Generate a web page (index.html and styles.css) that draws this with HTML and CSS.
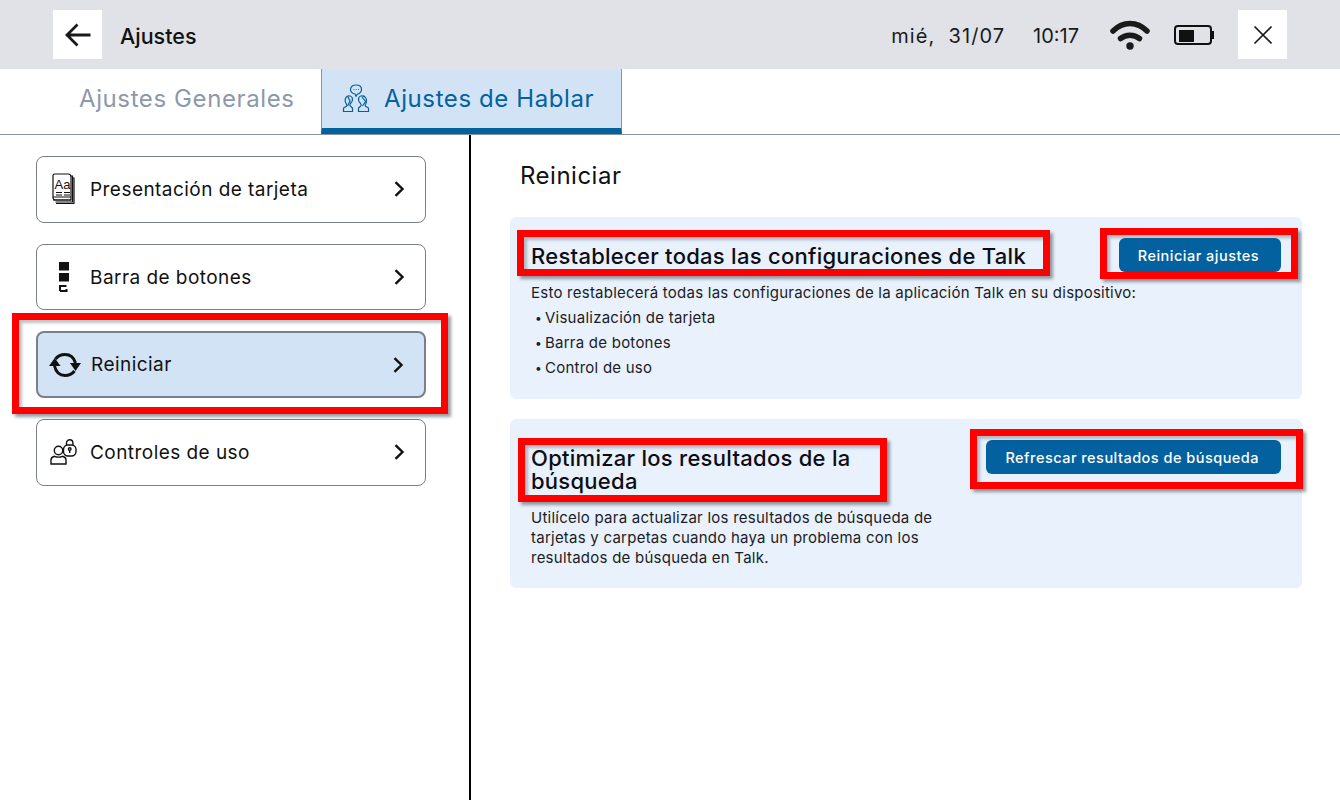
FILE: index.html
```html
<!DOCTYPE html>
<html lang="es">
<head>
<meta charset="utf-8">
<title>Ajustes</title>
<link rel="stylesheet" href="styles.css">
</head>
<body>
<div class="app">
  <header class="topbar">
    <button class="square back" aria-label="Atrás">
      <svg width="30" height="30" viewBox="0 0 30 30"><path d="M27.500 15H4M14.500 4.500 4 15l10.500 10.500" fill="none" stroke="#1a1a1a" stroke-width="2.800"/></svg>
    </button>
    <div class="app-title">Ajustes</div>
    <div class="status">
      <span class="date">mié,&nbsp; 31/07</span>
      <span class="time">10:17</span>
      <svg class="wifi" width="40" height="30" viewBox="0 0 40 30"><path d="M3 11C13 1 27 1 37 11" fill="none" stroke="#1a1a1a" stroke-width="5.500" stroke-linecap="round"/><path d="M10.500 18.500C16 14 24 14 29.500 18.500" fill="none" stroke="#1a1a1a" stroke-width="5.500" stroke-linecap="round"/><circle cx="20" cy="26" r="3.700" fill="#1a1a1a"/></svg>
      <svg class="battery" width="40" height="20" viewBox="0 0 40 20"><rect x="1" y="1" width="36" height="18" rx="3" fill="none" stroke="#111" stroke-width="2"/><rect x="5" y="5" width="15" height="12" fill="#111"/><rect x="38" y="6" width="2" height="8" fill="#111"/></svg>
    </div>
    <button class="square close" aria-label="Cerrar">
      <svg width="20" height="20" viewBox="0 0 20 20"><path d="M1.500 1.500l17 17M18.500 1.500l-17 17" fill="none" stroke="#1a1a1a" stroke-width="1.700"/></svg>
    </button>
  </header>

  <nav class="tabs">
    <div class="tab">Ajustes Generales</div>
    <div class="tab active">
      <svg width="28" height="29" viewBox="0 0 28 29" fill="none" stroke="#04619f" stroke-width="1.200"><path d="M14 1c3.400 0 5.500 2 5.500 4.500S17.400 10 15.500 10l-1.500 2.200L13 10c-2.200-.1-4.500-2-4.500-4.500S10.600 1 14 1z"/><path d="M11.500 5.500h.8M13.800 5.500h.8M16 5.500h.8"/><path d="M5 12.500c2-1.300 4.700-.4 5.300 1.500.6 2-.3 4-1.700 5.300-.8 1-1 2-.5 2.500L10.500 24v3.500H1.500V24l3-1.700c.6-.8.400-1.500-.2-2.500C2.500 17.500 2.800 14 5 12.500z"/><path d="M6 13l2 4-2.500 5"/><path d="M22 12.500c-2-1.300-4.700-.4-5.300 1.500-.6 2 .3 4 1.700 5.300.8 1 1 2 .5 2.500L16.500 24v3.500h10V24l-3-1.700c-.6-.8-.4-1.500.2-2.500 1.800-2.300 .5-6.800-1.700-7.800z"/><path d="M20 13l3.500 4.500-3 4.500"/></svg>
      <span>Ajustes de Hablar</span>
    </div>
  </nav>

  <main class="content">
    <aside class="side">
      <a class="item">
        <span class="ico">
          <svg width="24" height="32" viewBox="0 0 24 32" fill="none" stroke="#111" stroke-width="1.200"><path d="M2.500 1h13.500c2 0 3 1 3 3v23H3.500c-1.500 0-2.500-1-2.500-2.500V2.500C1 1.500 1.500 1 2.500 1z"/><path d="M19 3h1.500v26H3.500M20.500 5H22v25.500H4"/><path d="M1 24h18M1 27h18" /><path d="M4 19.500h6M12 19.500h6M4 22h6M12 22h6" stroke-width="1"/><text x="2.500" y="15.500" class="ico-text">Aa</text></svg>
        </span>
        <span class="label">Presentación de tarjeta</span>
        <svg class="chev" width="12" height="16" viewBox="0 0 12 16"><path d="M2.500 1.200 9.500 8l-7 6.800" fill="none" stroke="#111" stroke-width="2.400"/></svg>
      </a>
      <a class="item">
        <span class="ico">
          <svg width="10" height="30" viewBox="0 0 10 30"><rect x="0" y="0" width="10" height="8.500" fill="#111"/><rect x="0" y="11" width="10" height="8.500" fill="#111"/><path d="M1 29V24h6.500M1 29h6.500v-2" fill="none" stroke="#111" stroke-width="2"/></svg>
        </span>
        <span class="label lower">Barra de botones</span>
        <svg class="chev" width="12" height="16" viewBox="0 0 12 16"><path d="M2.500 1.200 9.500 8l-7 6.800" fill="none" stroke="#111" stroke-width="2.400"/></svg>
      </a>
      <a class="item current">
        <span class="ico">
          <svg width="32" height="24" viewBox="0 0 32 24" fill="none" stroke="#111" stroke-width="3"><path d="M6.500 6C9 2.800 12.500 1.500 16 1.500c5 0 9 3.200 10.500 8.500"/><path d="M25.500 18c-2.500 3.200-6 4.500-9.500 4.500-5 0-9-3.200-10.500-9.500"/><path d="M0 13 5.700 5 11.500 13z" fill="#111" stroke="none"/><path d="M21 10h11L26.500 18z" fill="#111" stroke="none"/></svg>
        </span>
        <span class="label">Reiniciar</span>
        <svg class="chev" width="12" height="16" viewBox="0 0 12 16"><path d="M2.500 1.200 9.500 8l-7 6.800" fill="none" stroke="#111" stroke-width="2.400"/></svg>
      </a>
      <a class="item">
        <span class="ico">
          <svg width="27" height="26" viewBox="0 0 27 26" fill="none" stroke="#111" stroke-width="1.400"><circle cx="8.500" cy="11.500" r="4.200"/><path d="M1 25v-4c0-2 1.500-3.200 3.500-3.700 2.500 1 5.500 1 8 0 2 .5 3.500 1.700 3.500 3.700v4z"/><rect x="13.500" y="6" width="12.500" height="11" rx="4.500"/><path d="M16.500 6V4a3.200 3.200 0 0 1 6.400 0v2"/><circle cx="19.700" cy="10" r="1.300"/><path d="M19.700 11v3"/></svg>
        </span>
        <span class="label">Controles de uso</span>
        <svg class="chev" width="12" height="16" viewBox="0 0 12 16"><path d="M2.500 1.200 9.500 8l-7 6.800" fill="none" stroke="#111" stroke-width="2.400"/></svg>
      </a>
    </aside>

    <section class="pane">
      <h1 class="pane-title">Reiniciar</h1>
      <article class="card first">
        <div class="card-head">
          <h2 class="card-title">Restablecer todas las configuraciones de Talk</h2>
          <button class="btn">Reiniciar ajustes</button>
        </div>
        <p class="lead">Esto restablecerá todas las configuraciones de la aplicación Talk en su dispositivo:</p>
        <ul class="bullets">
          <li>Visualización de tarjeta</li>
          <li>Barra de botones</li>
          <li>Control de uso</li>
        </ul>
      </article>
      <article class="card">
        <div class="card-head">
          <h2 class="card-title narrow">Optimizar los resultados de la búsqueda</h2>
          <button class="btn">Refrescar resultados de búsqueda</button>
        </div>
        <p class="note">Utilícelo para actualizar los resultados de búsqueda de tarjetas y carpetas cuando haya un problema con los resultados de búsqueda en Talk.</p>
      </article>
    </section>
  </main>

  <div class="mark m-item"></div>
  <div class="mark m-title1"></div>
  <div class="mark m-btn1"></div>
  <div class="mark m-title2"></div>
  <div class="mark m-btn2"></div>
</div>
</body>
</html>
```
FILE: styles.css
```css
* { box-sizing: border-box; }
html, body { margin: 0; padding: 0; }
body { font-family: Inter, "Liberation Sans", sans-serif; color: #111; background: #fff; }
.app { position: relative; width: 1340px; height: 800px; overflow: hidden; display: flex; flex-direction: column; }

.topbar { height: 69px; background: #e0e2e8; display: flex; align-items: center; padding-left: 53px; padding-right: 53px; flex: none; }
.square { width: 49px; height: 49px; background: #fff; border: 0; padding: 0; display: flex; align-items: center; justify-content: center; }
.app-title { margin: 2px 0 0 18px; font-size: 21.500px; font-weight: 500; color: #111; }
.status { margin-left: auto; display: flex; align-items: center; font-size: 20px; color: #1a1a1a; }
.date { letter-spacing: 1.050px; margin-top: 2px; }
.time { margin-left: 28px; margin-top: 2px; }
.wifi { margin-left: 31px; }
.battery { margin-left: 24px; margin-top: 1px; }
.close { margin-left: 24px; }

.tabs { height: 66px; flex: none; display: flex; border-bottom: 1px solid #8a9499; padding-left: 79px; }
.tab { height: 65px; display: flex; align-items: center; width: 242px; padding-bottom: 6px; font-size: 24px; letter-spacing: .6px; color: #8c99ab; }
.tab.active { width: 301px; background: #d3e3f6; color: #04619f; border-left: 1px solid #8a9499; border-right: 1px solid #8a9499; border-bottom: 6px solid #04619f; padding-left: 20px; padding-bottom: 0; gap: 14px; }

.content { flex: 1; display: flex; min-height: 0; }
.side { width: 471px; border-right: 2px solid #000; padding: 21px 0 0 36px; display: flex; flex-direction: column; gap: 21px; }
.item { width: 390px; height: 66.670px; border: 1px solid #7b7f87; border-radius: 8px; display: flex; align-items: center; color: #111; }
.item.current { background: #d3e3f6; border-width: 2px; }
.ico { width: 53px; flex: none; display: flex; align-items: center; justify-content: center; }
.ico-text { font-size: 13px; font-family: "Liberation Sans", sans-serif; stroke: none; fill: #111; }
.label { flex: 1; font-size: 19px; letter-spacing: .45px; }
.label.lower { padding-top: 2px; }
.chev { margin-right: 20px; flex: none; }

.pane { flex: 1; padding: 0 38px 0 39px; }
.pane-title { margin: 0; padding: 1px 0 0 10px; height: 82px; line-height: 80px; font-size: 24px; letter-spacing: .5px; font-weight: 400; }
.card { background: #e8f1fc; border-radius: 6px; padding: 21px 21px 20px; margin-bottom: 20px; }
.card.first { padding-bottom: 19.500px; }
.card-head { display: flex; justify-content: space-between; align-items: flex-start; }
.card-title { margin: 6.500px 0 0; font-size: 22px; letter-spacing: .27px; line-height: 23px; font-weight: 500; color: #0d0d14; }
.card-title.narrow { width: 400px; }
.btn { border: 0; border-radius: 6px; background: #04619f; color: #fff; font: 500 14.500px Inter, "Liberation Sans", sans-serif; letter-spacing: .48px; height: 34px; padding: 0 22px 0 19px; }
.lead { margin: 7.500px 0 0; font-size: 15px; letter-spacing: .24px; line-height: 25px; color: #1c1c24; }
.bullets { list-style: none; margin: 0; padding: 0 0 0 4px; font-size: 15px; letter-spacing: .24px; line-height: 25px; color: #1c1c24; }
.bullets li { display: flex; }
.bullets li::before { content: "•"; width: 10px; font-size: 12px; }
.note { margin: 15.500px 0 0; width: 420px; font-size: 15px; letter-spacing: .24px; line-height: 20px; color: #1c1c24; }

.mark { position: absolute; border: 7px solid #f00; box-shadow: 3px 3px 3px rgba(70, 80, 90, .55), inset 3px 3px 3px rgba(70, 80, 90, .35); pointer-events: none; }
.m-item { left: 12px; top: 313px; width: 436px; height: 101px; }
.m-title1 { left: 517px; top: 230px; width: 533px; height: 46px; }
.m-btn1 { left: 1100px; top: 228px; width: 198px; height: 51px; }
.m-title2 { left: 518px; top: 438px; width: 369px; height: 64px; }
.m-btn2 { left: 970px; top: 429px; width: 333px; height: 60px; }
```
